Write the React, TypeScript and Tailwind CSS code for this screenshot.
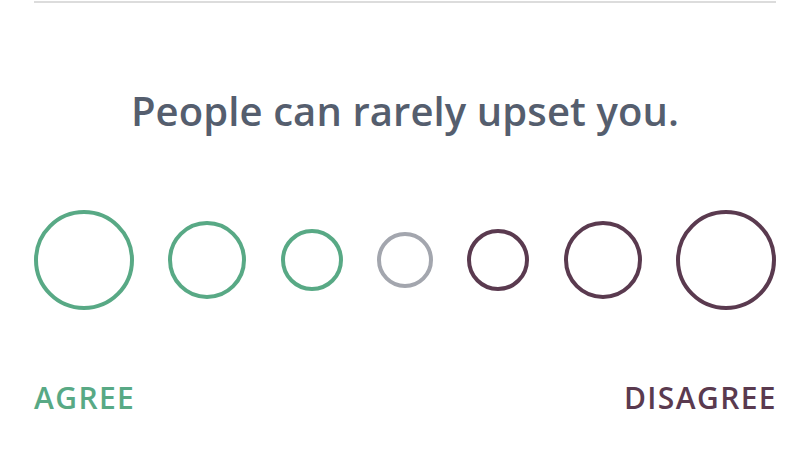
const GREEN = 'border-[#58a985]';
const PURPLE = 'border-[#5a3a4f]';

// sizes from left (agree) to right (disagree)
const options = [
  { size: 'w-[100px] h-[100px]', color: GREEN },
  { size: 'w-[78px] h-[78px]', color: GREEN },
  { size: 'w-[62px] h-[62px]', color: GREEN },
  { size: 'w-[56px] h-[56px]', color: 'border-[#a3a6ae]' },
  { size: 'w-[62px] h-[62px]', color: PURPLE },
  { size: 'w-[78px] h-[78px]', color: PURPLE },
  { size: 'w-[100px] h-[100px]', color: PURPLE },
];

export default function App() {
  return (
    <div className="w-[810px] h-[455px] bg-white px-[34px] font-['Open_Sans',sans-serif] overflow-hidden">
      <div className="h-[2px] mt-px bg-[#dcdcdc]" />

      <h1 className="mt-[84px] text-center text-[40px] leading-[48px] tracking-[0.1px] font-semibold text-[#555e6e]">
        People can rarely upset you.
      </h1>

      {/* Answer scale */}
      <div className="mt-[75px] h-[100px] flex items-center justify-between">
        {options.map((o, i) => (
          <button
            key={i}
            className={`${o.size} ${o.color} rounded-full border-4 bg-white shrink-0`}
          />
        ))}
      </div>

      <div className="mt-[71px] -mr-px flex justify-between text-[30px] leading-[34px] tracking-[1.4px] font-semibold">
        <span className="text-[#58a985]">AGREE</span>
        <span className="text-[#5a3a4f]">DISAGREE</span>
      </div>
    </div>
  );
}
